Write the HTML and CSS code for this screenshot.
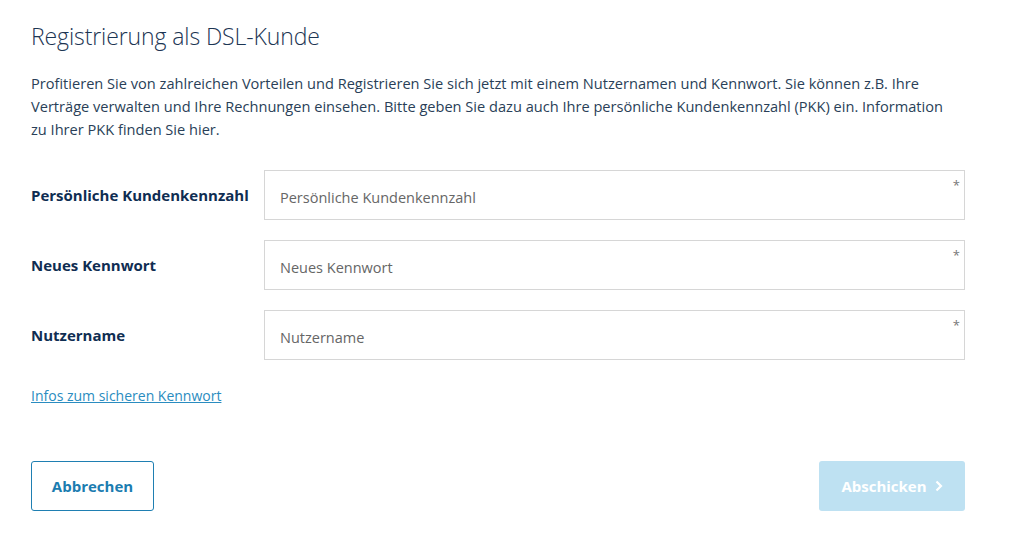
FILE: index.html
```html
<!DOCTYPE html>
<html lang="de">
<head>
<meta charset="utf-8">
<title>Registrierung als DSL-Kunde</title>
<link rel="stylesheet" href="styles.css">
</head>
<body>
<main class="page">
  <h1 class="title">Registrierung als DSL-Kunde</h1>
  <p class="intro">Profitieren Sie von zahlreichen Vorteilen und Registrieren Sie sich jetzt mit einem Nutzernamen und Kennwort. Sie können z.B. Ihre Verträge verwalten und Ihre Rechnungen einsehen. Bitte geben Sie dazu auch Ihre persönliche Kundenkennzahl (PKK) ein. Information zu Ihrer PKK finden Sie hier.</p>
  <form class="form">
    <div class="row">
      <label class="label" for="pkk">Persönliche Kundenkennzahl</label>
      <div class="field"><input id="pkk" class="input" placeholder="Persönliche Kundenkennzahl"><span class="req">*</span></div>
    </div>
    <div class="row">
      <label class="label" for="pw">Neues Kennwort</label>
      <div class="field"><input id="pw" class="input" placeholder="Neues Kennwort"><span class="req">*</span></div>
    </div>
    <div class="row">
      <label class="label" for="user">Nutzername</label>
      <div class="field"><input id="user" class="input" placeholder="Nutzername"><span class="req">*</span></div>
    </div>
    <a class="link" href="#">Infos zum sicheren Kennwort</a>
    <div class="actions">
      <button type="button" class="btn btn-secondary">Abbrechen</button>
      <button type="button" class="btn btn-primary">Abschicken <svg class="chev" width="8" height="12" viewBox="0 0 8 12"><path d="M1.5 1.5 L6 6 L1.5 10.5" fill="none" stroke="#fff" stroke-width="2.2"/></svg></button>
    </div>
  </form>
</main>
</body>
</html>
```
FILE: styles.css
```css
* { box-sizing: border-box; }
html, body { margin: 0; padding: 0; background: #fff; }
body { font-family: "Open Sans", "Noto Sans", sans-serif; color: #1c3553; }
.page { width: 965px; padding: 18px 0 0 31px; }
.title { font-size: 23px; font-weight: 300; margin: 0; line-height: 36px; color: #1c3553; letter-spacing: -0.1px; }
.intro { max-width: 921px; font-size: 14.6px; line-height: 23px; margin: 18px 0 0; color: #2a3f58; letter-spacing: 0; }
.form { margin-top: 29px; display: flex; flex-direction: column; }
.row { display: flex; align-items: center; margin-bottom: 20px; }
.row:nth-child(3) { margin-bottom: 0; }
.label { width: 233px; font-size: 15px; font-weight: 700; color: #0f2d52; }
.field { flex: 1; position: relative; height: 50px; }
.input { width: 100%; height: 50px; border: 1px solid #d6d6d6; padding: 4px 15px 0; font-family: inherit; font-size: 14.5px; color: #333; outline: none; }
.input::placeholder { color: #666; opacity: 1; }
.req { position: absolute; right: 5px; top: 6px; font-size: 13px; color: #777; }
.link { margin-top: 26px; font-size: 14px; color: #2a8cc0; text-decoration: underline; align-self: flex-start; }
.actions { margin-top: 56px; display: flex; justify-content: space-between; }
.btn { height: 50px; font-family: inherit; font-size: 15px; font-weight: 700; border-radius: 3px; cursor: pointer; }
.btn-secondary { width: 123px; background: #fff; border: 1px solid #1f7fb2; color: #1b7cb0; }
.btn-primary { width: 146px; background: #bee1f2; border: none; color: #fff; display: flex; align-items: center; justify-content: center; gap: 8px; }
.chev { display: block; }
```
